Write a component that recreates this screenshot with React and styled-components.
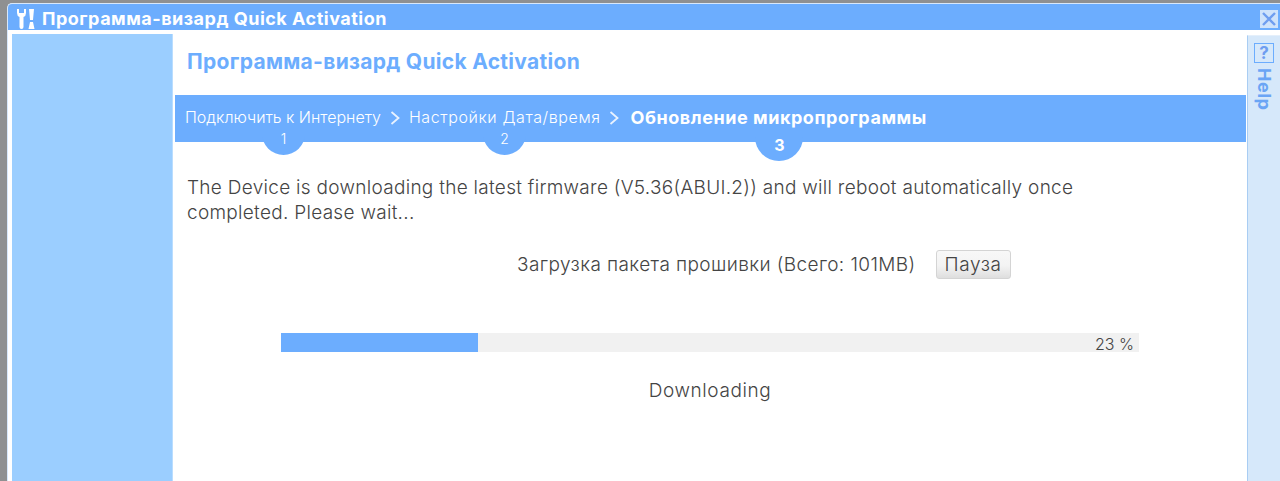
import styled, { createGlobalStyle } from "styled-components";

const GlobalStyle = createGlobalStyle`
    html, body {
        margin: 0;
        height: 481px;
        overflow: hidden;
        background: #8f9091;
    }
    * {
        box-sizing: border-box;
    }
`;

const Page = styled.div`
    height: 481px;
    padding: 3px 0 0 7px;
    font-family: "Inter", "Open Sans", sans-serif;
    color: #444;
`;
const Window = styled.div`
    height: 478px;
    background: #fff;
    border-top-left-radius: 5px;
    display: flex;
    flex-direction: column;
    overflow: hidden;
    border-top: 1px solid #d8e8fb;
    border-left: 1px solid #d8e8fb;
`;
const TitleBar = styled.div`
    height: 26px;
    flex: none;
    background: #6cadfe;
    display: flex;
    align-items: center;
    padding: 3px 0 0 6px;
    color: #fff;
    font-size: 18px;
    font-weight: 700;
    letter-spacing: 0.5px;
`;
const TitleText = styled.span`
    margin-left: 5px;
    flex: 1;
`;
const CloseBox = styled.div`
    width: 18px;
    height: 18px;
    margin-right: 2px;
    background: #cfe3fb;
    display: flex;
    align-items: center;
    justify-content: center;
`;
const Body = styled.div`
    flex: 1;
    display: flex;
    padding: 4px 0 0 4px;
    min-height: 0;
`;
const SideBar = styled.div`
    width: 161px;
    flex: none;
    background: #9bceff;
    border-right: 1px solid #b9ddff;
`;
const Main = styled.div`
    width: 1071px;
    flex: none;
    margin-left: 2px;
    display: flex;
    flex-direction: column;
`;
const Heading = styled.h1`
    margin: 0;
    height: 61px;
    padding: 15px 0 0 12px;
    color: #6cadfe;
    font-size: 21px;
    line-height: 26px;
    font-weight: 700;
    letter-spacing: 0.3px;
`;
const Steps = styled.div`
    height: 47px;
    flex: none;
    background: #6cadfe;
    display: flex;
    align-items: flex-start;
    padding: 11px 0 0 10px;
    color: #fff;
`;
const Step = styled.div`
    position: relative;
    font-size: ${(p) => (p.$active ? "18px" : "16px")};
    font-weight: ${(p) => (p.$active ? 700 : 300)};
    line-height: 23px;
    letter-spacing: ${(p) => p.$spacing}px;
    white-space: nowrap;
`;
const StepBadge = styled.div`
    position: absolute;
    top: 25px;
    left: ${(p) => p.$left}px;
    width: ${(p) => (p.$active ? 48 : 43)}px;
    height: ${(p) => (p.$active ? 30 : 24)}px;
    background: #6cadfe;
    border-radius: 0 0 24px 24px;
    text-align: center;
    font-size: ${(p) => (p.$active ? "16px" : "14px")};
    font-weight: ${(p) => (p.$active ? 700 : 300)};
    line-height: ${(p) => (p.$active ? "29px" : "15px")};
    letter-spacing: 0;
`;
const Chevron = styled.svg`
    width: 12px;
    height: 16px;
    flex: none;
    margin: ${(p) => p.$margin};
`;
const Content = styled.div`
    padding: 33px 0 0 12px;
    flex: 1;
`;
const Message = styled.p`
    margin: 0;
    width: 900px;
    font-size: 19px;
    font-weight: 300;
    line-height: 25px;
    letter-spacing: 0.29px;
`;
const DownloadRow = styled.div`
    display: flex;
    align-items: center;
    margin: 24px 0 0 330px;
    height: 30px;
    font-size: 19px;
    font-weight: 300;
    letter-spacing: 0.4px;
`;
const PauseButton = styled.button`
    margin-left: 20px;
    width: 75px;
    height: 29px;
    padding: 0;
    border: 1px solid #d4d4d4;
    border-radius: 3px;
    background: linear-gradient(#f8f8f8 0%, #f3f3f3 55%, #dedede 100%);
    font-family: inherit;
    font-size: 19px;
    font-weight: 300;
    letter-spacing: 0.6px;
    color: #444;
`;
const ProgressTrack = styled.div`
    position: relative;
    margin: 54px 0 0 94px;
    width: 858px;
    height: 19px;
    background: #f1f1f1;
`;
const ProgressFill = styled.div`
    height: 100%;
    background: #6cadfe;
`;
const ProgressLabel = styled.span`
    position: absolute;
    right: 5px;
    top: 0;
    font-size: 16px;
    font-weight: 300;
    line-height: 22px;
`;
const StatusText = styled.div`
    margin: 26px 0 0 94px;
    width: 858px;
    text-align: center;
    font-size: 19px;
    font-weight: 300;
    line-height: 25px;
    letter-spacing: 0.6px;
`;
const HelpPanel = styled.div`
    flex: 1;
    margin: 1px 0 0 1px;
    background: #d6e8fa;
    border-left: 1px solid #a9cdf3;
    border-top: 1px solid #e4effb;
    display: flex;
    flex-direction: column;
    align-items: center;
    padding-top: 7px;
    color: #6aa5f5;
`;
const HelpBox = styled.div`
    width: 20px;
    height: 20px;
    border: 1px solid #6cadfe;
    display: flex;
    align-items: center;
    justify-content: center;
    font-size: 17px;
    font-weight: 700;
    color: #6f9ef0;
`;
const HelpText = styled.div`
    writing-mode: vertical-rl;
    margin-top: 5px;
    font-size: 18px;
    line-height: 20px;
    font-weight: 700;
    letter-spacing: 0.5px;
`;

const progress = 23;

function StepChevron({ margin }) {
    return (
        <Chevron $margin={margin} viewBox="0 0 12 16">
            <path d="M2.5 2 L9.5 8 L2.5 14" fill="none" stroke="#e8f2ff" strokeWidth="1.8" />
        </Chevron>
    );
}

function ToolsIcon() {
    return (
        <svg width="23" height="22" viewBox="0 0 23 22" style={{ flex: "none" }}>
            <path
                d="M3 1 L3 5 Q3 8 5.5 9 L5.5 19 Q5.5 21 7.5 21 Q9.5 21 9.5 19 L9.5 9 Q12 8 12 5 L12 1 L10 1 L10 5 L5 5 L5 1 Z"
                fill="#fff"
            />
            <path d="M15 1 L20 1 L19 12 L16 12 Z M16 14 L19 14 L20.5 21 L14.5 21 Z" fill="#fff" />
        </svg>
    );
}

function App() {
    return (
        <Page>
            <GlobalStyle />
            <Window>
                <TitleBar>
                    <ToolsIcon />
                    <TitleText>Программа-визард Quick Activation</TitleText>
                    <CloseBox>
                        <svg width="14" height="14" viewBox="0 0 14 14">
                            <path d="M1 1 L13 13 M13 1 L1 13" stroke="#6f9ef0" strokeWidth="2.4" />
                        </svg>
                    </CloseBox>
                </TitleBar>
                <Body>
                    <SideBar />
                    <Main>
                        <Heading>Программа-визард Quick Activation</Heading>
                        <Steps>
                            <Step $spacing={0}>
                                Подключить к Интернету
                                <StepBadge $left={77}>1</StepBadge>
                            </Step>
                            <StepChevron margin="4px 8px 0 8px" />
                            <Step $spacing={0.6}>
                                Настройки Дата/время
                                <StepBadge $left={74}>2</StepBadge>
                            </Step>
                            <StepChevron margin="4px 10px 0 8px" />
                            <Step $active $spacing={0.55}>
                                Обновление микропрограммы
                                <StepBadge $active $left={125}>3</StepBadge>
                            </Step>
                        </Steps>
                        <Content>
                            <Message>
                                The Device is downloading the latest firmware (V5.36(ABUI.2)) and will reboot
                                automatically once completed. Please wait...
                            </Message>
                            <DownloadRow>
                                Загрузка пакета прошивки (Всего: 101MB)
                                <PauseButton>Пауза</PauseButton>
                            </DownloadRow>
                            <ProgressTrack>
                                <ProgressFill style={{ width: `${progress}%` }} />
                                <ProgressLabel>{progress} %</ProgressLabel>
                            </ProgressTrack>
                            <StatusText>Downloading</StatusText>
                        </Content>
                    </Main>
                    <HelpPanel>
                        <HelpBox>?</HelpBox>
                        <HelpText>Help</HelpText>
                    </HelpPanel>
                </Body>
            </Window>
        </Page>
    );
}

export default App;
